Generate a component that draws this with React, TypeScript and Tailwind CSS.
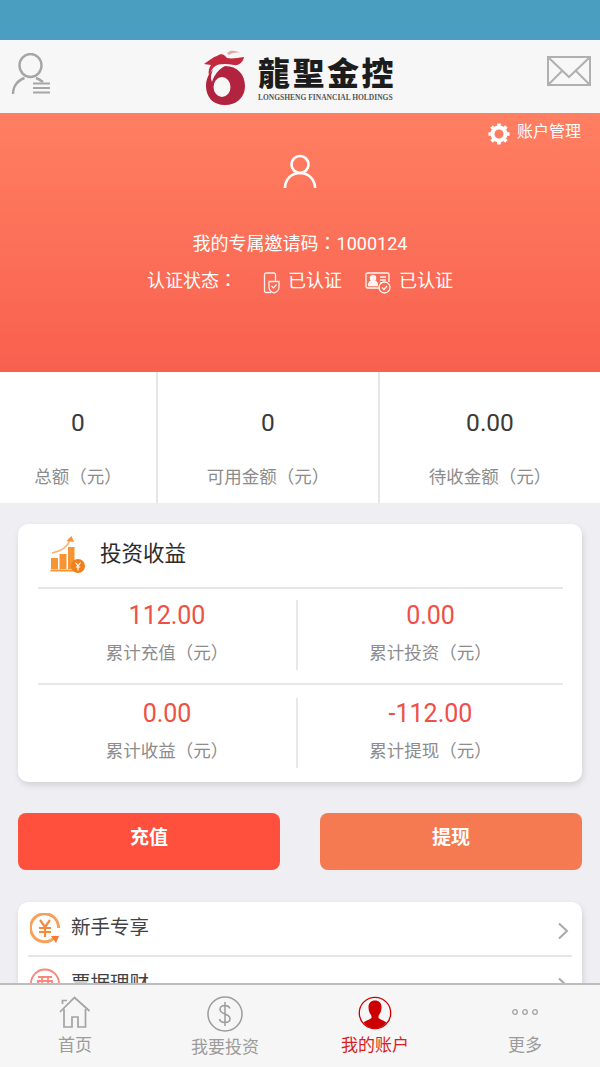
import React from "react";

const font = { fontFamily: '"Roboto","Noto Sans CJK SC",sans-serif' };
const colonFont = { fontFamily: '"Roboto","Noto Sans CJK TC",sans-serif' };

function Stat({ v, l, w, border }: { v: string; l: string; w: string; border?: boolean }) {
  return (
    <div className={`${w} ${border ? "border-r-2 border-[#e6e6e6]" : ""} flex flex-col items-center h-full`}>
      <div className="text-[24.5px] leading-[28px] text-[#3a3a3a] mt-[37px]">{v}</div>
      <div className="text-[17.5px] leading-[24px] text-[#8c8c8c] mt-[28px]">{l}</div>
    </div>
  );
}

function Cell({ v, l, w, border }: { v: string; l: string; w: string; border?: boolean }) {
  return (
    <div className={`${w} h-[70px] pt-[2px] flex flex-col items-center ${border ? "border-r-2 border-[#e8e8e8]" : ""}`}>
      <div className="text-[25px] leading-[28px] text-[#ee5047]">{v}</div>
      <div className="text-[17.5px] leading-[24px] text-[#8c8c8c] mt-[11px]">{l}</div>
    </div>
  );
}

function Chevron() {
  return (
    <svg width="12" height="18" viewBox="0 0 12 18" fill="none" stroke="#a8a8a8" strokeWidth="2">
      <path d="M2 1.5 L10 9 L2 16.5" />
    </svg>
  );
}

export default function App() {
  return (
    <div className="w-[600px] h-[1067px] flex flex-col overflow-hidden bg-[#eeeef3]" style={font}>
      <div className="h-[40px] shrink-0 bg-[#4a9ebf]" />
      <header className="h-[73px] shrink-0 bg-[#f7f7f7] flex items-center justify-between relative">
        <svg className="ml-[11px] mb-[5px]" width="40" height="42" viewBox="0 0 40 42" fill="none" stroke="#a6a6a6" strokeWidth="2.400">
          <ellipse cx="19.500" cy="12.500" rx="11" ry="11.500" />
          <path d="M2 41 C2 33 7 27 13.500 25 M25 25 C28 26 30 27.500 32 29" />
          <path d="M22 30.500 H39 M22 35 H39 M22 39.500 H39" strokeWidth="2.200" />
        </svg>
        <div className="flex items-start absolute left-[203px] top-[9px]">
          <svg width="44" height="58" viewBox="0 0 44 58">
            <path d="M22 17 C35 17 42 26 42 37 C42 49 33 56 22 56 C10 56 3 48 3 37 C3 30 6 24 10 21 C7 27 8 30 9 33 C11 26 16 20 22 17Z" fill="#b1233f" />
            <ellipse cx="19" cy="38" rx="8.500" ry="10" fill="#f7f7f7" />
            <path d="M1 15 C7 11 10 8 14 7 C18 4 21 5 24 9 C29 10 34 9 41 8 C40 13 36 17 31 16 C24 15 16 14 11 18 C8 21 6 27 6 27 C5 22 6 19 8 16 Z" fill="#c4283f" />
            <path d="M24 4 C28 0 34 2 38 4 C33 3 29 4 26 6Z" fill="#e8a9a5" />
          </svg>
          <div className="ml-[11px] flex flex-col items-start mt-[4px]">
            <div className="text-[32px] leading-[36px] font-black text-[#1c1c1c] tracking-[2.5px] whitespace-nowrap" style={{ fontFamily: '"Noto Sans CJK TC",sans-serif' }}>龍聖金控</div>
            <div className="text-[7.500px] leading-[8px] font-bold text-[#555] whitespace-nowrap mt-[5px]" style={{ fontFamily: '"Liberation Serif",serif' }}>LONGSHENG FINANCIAL HOLDINGS</div>
          </div>
        </div>
        <svg className="mr-[9px] mb-[11px]" width="45" height="30" viewBox="0 0 45 30" fill="none" stroke="#b0b0b0" strokeWidth="2">
          <rect x="2" y="1" width="42" height="28" />
          <path d="M2 1 L23 21 L44 1 M2 29 L16 15 M44 29 L30 15" />
        </svg>
      </header>

      <section className="h-[259px] shrink-0 bg-gradient-to-b from-[#ff7f62] to-[#f8604e] relative flex flex-col items-center text-white">
        <div className="absolute right-[19px] top-[5px] flex items-center">
          <svg width="24" height="24" viewBox="0 0 24 24" className="mt-[4px] mr-[6px]" fill="none" stroke="#fff">
            <circle cx="12" cy="12" r="6.500" strokeWidth="4" />
            <path d="M12 1.500V5M12 19v3.500M1.500 12H5M19 12h3.500M4.600 4.600l2.400 2.400M17 17l2.400 2.400M4.600 19.400L7 17M17 7l2.400-2.400" strokeWidth="3.600" />
          </svg>
          <span className="text-[16px] leading-[22px]">账户管理</span>
        </div>
        <svg className="mt-[41px]" width="34" height="35" viewBox="0 0 34 35" fill="none" stroke="#fff" strokeWidth="2.600">
          <circle cx="17" cy="10.500" r="8.500" />
          <path d="M2 34 C2 25 9 19 17 19 C25 19 32 25 32 34" />
        </svg>
        <div className="mt-[43px] text-[18px] leading-[24px] whitespace-nowrap" style={colonFont}>我的专属邀请码：1000124</div>
        <div className="mt-[11px] flex items-center text-[18px] leading-[24px] whitespace-nowrap" style={colonFont}>
          <span>认证状态：</span>
          <svg className="ml-[26px] mt-[5px]" width="17" height="22" viewBox="0 0 17 22" fill="none" stroke="#fff" strokeWidth="1.300" opacity="0.9">
            <path d="M8 20.500H3a1.500 1.500 0 0 1-1.500-1.500V2.500A1.500 1.500 0 0 1 3 1h8a1.500 1.500 0 0 1 1.500 1.500V9" />
            <path d="M6 9.500h10v6c0 3-2.500 4.500-5 5.500-2.500-1-5-2.500-5-5.500z" />
            <path d="M8.500 14l2 2 3-3.500" />
          </svg>
          <span className="ml-[8px]">已认证</span>
          <svg className="ml-[23px] mt-[4px]" width="26" height="22" viewBox="0 0 26 22" fill="none" stroke="#fff" strokeWidth="1.300" opacity="0.95">
            <path d="M15 16H2.500A1.500 1.500 0 0 1 1 14.500V2.500A1.500 1.500 0 0 1 2.500 1h20A1.500 1.500 0 0 1 24 2.500V10" />
            <circle cx="8" cy="6" r="2.600" fill="#fff" />
            <path d="M3.500 13.500c0-3 2-4.500 4.500-4.500s4.500 1.500 4.500 4.500z" fill="#fff" />
            <path d="M15 5h6M15 8h6M15 11h2" />
            <circle cx="19.500" cy="15.500" r="5.500" />
            <path d="M17 15.500l2 2 3-3.500" />
          </svg>
          <span className="ml-[8px]">已认证</span>
        </div>
      </section>

      <section className="h-[131px] shrink-0 bg-white flex">
        <Stat v="0" l="总额（元）" w="w-[158px]" border />
        <Stat v="0" l="可用金额（元）" w="w-[222px]" border />
        <Stat v="0.00" l="待收金额（元）" w="w-[220px]" />
      </section>

      <main className="flex-1 min-h-0 overflow-hidden px-[18px] pt-[21px]">
        <div className="w-[564px] h-[258px] bg-white rounded-[10px] shadow-[1px_3px_6px_rgba(0,0,0,0.12)] pl-[20px] pr-[19px]">
          <div className="h-[65px] border-b-2 border-[#e6e6e6] flex items-center">
            <svg className="ml-[12px] -mt-[3px]" width="36" height="38" viewBox="0 0 36 38">
              <path d="M1 23h7v11H1zM9.500 19h7v15h-7zM18 12h6.500v22H18z" fill="#f79433" />
              <path d="M0.500 34.500h25v2H0.500z" fill="#f79433" />
              <path d="M2 18C12 16 18 11 20 5" fill="none" stroke="#f9b36e" strokeWidth="1.600" />
              <path d="M16.500 6L21.500 1 24 7z" fill="#f79433" />
              <circle cx="28" cy="31" r="7" fill="#f07f1c" />
              <path d="M25.500 27.500l2.500 3.500 2.500-3.500M28 31v4.500M25.800 32h4.400" fill="none" stroke="#fff" strokeWidth="1.200" />
            </svg>
            <span className="ml-[14px] text-[21.500px] text-[#2c2c2c] -mt-[3px]">投资收益</span>
          </div>
          <div className="flex mt-[11px]">
            <Cell v="112.00" l="累计充值（元）" w="w-[260px]" border />
            <Cell v="0.00" l="累计投资（元）" w="w-[265px]" />
          </div>
          <div className="h-[2px] bg-[#e8e8e8] mt-[13px]" />
          <div className="flex mt-[13px]">
            <Cell v="0.00" l="累计收益（元）" w="w-[260px]" border />
            <Cell v="-112.00" l="累计提现（元）" w="w-[265px]" />
          </div>
        </div>

        <div className="flex justify-between w-[564px] mt-[31px]">
          <button className="w-[262px] h-[57px] rounded-[8px] bg-[#ff4f3d] text-white text-[19px] font-bold pb-[6px]">充值</button>
          <button className="w-[262px] h-[57px] rounded-[8px] bg-[#f57a52] text-white text-[19px] font-bold pb-[6px]">提现</button>
        </div>

        <div className="w-[564px] h-[200px] bg-white rounded-[10px] shadow-[1px_3px_6px_rgba(0,0,0,0.12)] mt-[32px] px-[10px]">
          <div className="h-[55px] border-b-2 border-[#e6e6e6] flex items-center">
            <svg className="ml-[2px] mb-[1px]" width="30" height="31" viewBox="0 0 30 31" fill="none">
              <path d="M25 24A14 14 0 1 1 28.500 15" stroke="#f7a25c" strokeWidth="3" />
              <path d="M21 23h8.500v-1L26 30z" fill="#f47a3a" />
              <path d="M10 7l5 7 5-7M9 15h12M9 19h12M15 14v10" stroke="#f58a3f" strokeWidth="2.200" />
            </svg>
            <span className="ml-[11px] text-[19.500px] text-[#424242] -mt-[1px]">新手专享</span>
            <span className="ml-auto mr-[3px] mt-[4px]"><Chevron /></span>
          </div>
          <div className="h-[54px] flex items-center">
            <svg className="ml-[2px] mb-[1px]" width="30" height="31" viewBox="0 0 30 31" fill="none" stroke="#f9877c" strokeWidth="1.800">
              <circle cx="15" cy="15.500" r="14" />
              <path d="M8 9h14M8 13h14v5H8zM12 9v9M18 9v9M8 22h14" />
            </svg>
            <span className="ml-[11px] text-[19.500px] text-[#424242] -mt-[1px]">票据理财</span>
            <span className="ml-auto mr-[3px] mt-[4px]"><Chevron /></span>
          </div>
        </div>
      </main>

      <nav className="h-[84px] shrink-0 bg-[#f6f6f6] border-t-2 border-[#bdbdbd] flex relative">
        <div className="w-[150px] flex flex-col items-center pt-[11px] text-[#9b9b9b]">
          <svg width="32" height="32" viewBox="0 0 32 32" fill="none" stroke="#a3a3a3" strokeWidth="1.700">
            <path d="M1 16 L15.500 1.500 L30.500 15" />
            <path d="M3.500 8V4.500h4.500M5 13V31h8V21h6v10h7.500V13" />
          </svg>
          <span className="text-[17px] leading-[24px] mt-[5px]">首页</span>
        </div>
        <div className="w-[150px] flex flex-col items-center pt-[11px] text-[#9b9b9b]">
          <svg width="36" height="36" viewBox="0 0 36 36" fill="none" stroke="#9c9c9c" strokeWidth="1.500">
            <circle cx="18" cy="18" r="17" />
            <path d="M23 12.500C22 10 20 9.500 18 9.500c-3 0-5 1.500-5 4s2.500 3.500 5 4.500 5 2 5 4.500-2 4-5 4-5-1-5.500-3.500M18 6v24" />
          </svg>
          <span className="text-[17px] leading-[24px] mt-[3px]">我要投资</span>
        </div>
        <div className="w-[150px] flex flex-col items-center pt-[11px] text-[#d81e1e]">
          <svg width="34" height="34" viewBox="0 0 34 34" fill="none">
            <circle cx="17" cy="17" r="15.700" stroke="#cc0000" strokeWidth="1.300" />
            <path d="M17 4.500c-4 0-6.500 2.500-6.500 6.500 0 3 .8 6 2.500 8 .6.800.8 2 .4 3-1 1.500-5.500 2.500-7.900 4.500 2.500 3.500 6.500 6 11.500 6s9-2.500 11.500-6c-2.400-2-6.900-3-7.900-4.500-.4-1-.2-2.200.4-3 1.700-2 2.500-5 2.500-8 0-4-2.500-6.500-6.500-6.500z" fill="#cc0000" />
          </svg>
          <span className="text-[17px] leading-[24px] mt-[3px]">我的账户</span>
        </div>
        <div className="w-[150px] flex flex-col items-center pt-[11px] text-[#9b9b9b]">
          <svg className="mt-[12px] mb-[7px]" width="28" height="8" viewBox="0 0 28 8" fill="none" stroke="#a3a3a3" strokeWidth="1.300">
            <circle cx="4" cy="4" r="2.300" />
            <circle cx="14" cy="4" r="2.300" />
            <circle cx="24" cy="4" r="2.300" />
          </svg>
          <span className="text-[17px] leading-[24px] mt-[10px]">更多</span>
        </div>
      </nav>
    </div>
  );
}
